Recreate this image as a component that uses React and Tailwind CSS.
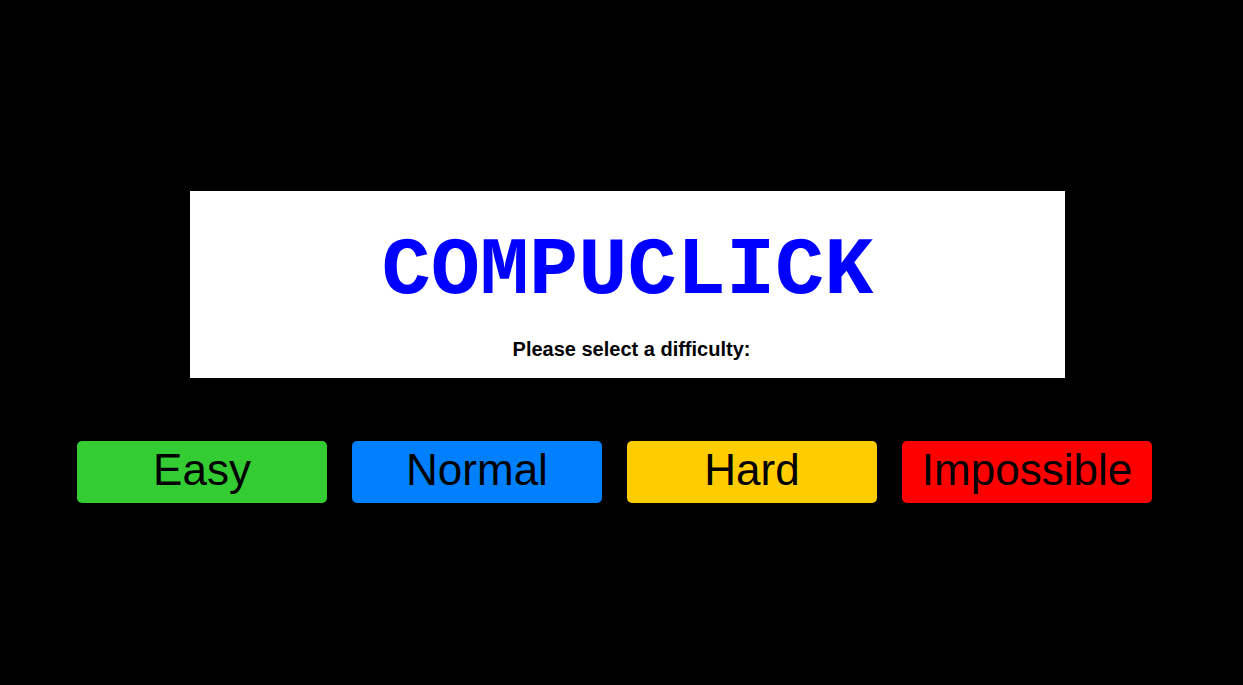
import React from "react";

const levels = [
  { name: "Easy", color: "bg-[#33cc33]" },
  { name: "Normal", color: "bg-[#0080ff]" },
  { name: "Hard", color: "bg-[#ffcc00]" },
  { name: "Impossible", color: "bg-[#ff0000]" },
];

const App = () => {
  return (
    <div className="w-full h-[685px] bg-black overflow-hidden pt-[191px]">
      <div className="ml-[190px] w-[875px] h-[187px] bg-white flex flex-col items-center">
        <h1 className="mt-[40px] text-[82px] leading-none font-bold text-[#0000ff] font-['Liberation_Mono','Courier_New',monospace]">
          COMPUCLICK
        </h1>
        <p className="mt-[26px] ml-[8px] text-[20px] leading-none font-bold text-black font-['Liberation_Sans',Arial,sans-serif]">
          Please select a difficulty:
        </p>
      </div>
      <div className="mt-[63px] pl-[77px] flex gap-[25px]">
        {levels.map((level) => (
          <button
            key={level.name}
            className={`${level.color} w-[250px] h-[62px] rounded-[5px] flex items-center justify-center pb-[5px] text-[44px] leading-none text-black font-['Liberation_Sans',Arial,sans-serif]`}
          >
            {level.name}
          </button>
        ))}
      </div>
    </div>
  );
};

export default App;
